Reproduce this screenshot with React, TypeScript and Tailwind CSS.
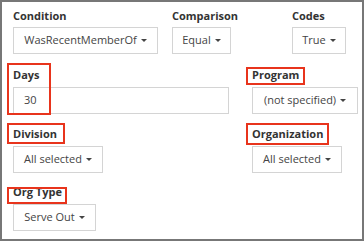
import React from "react";

const font = { fontFamily: '"Open Sans", "Noto Sans", sans-serif' };

function Caret() {
  return (
    <svg width="6" height="3" viewBox="0 0 6 3" className="ml-[4px] shrink-0">
      <path d="M0 0 L6 0 L3 3 Z" fill="#444" />
    </svg>
  );
}

function Select({ text, w }: { text: string; w: string }) {
  return (
    <div
      className={`${w} h-[27px] border border-[#d4d4d4] bg-white flex items-center justify-center text-[11px] text-[#444]`}
    >
      <span>{text}</span>
      <Caret />
    </div>
  );
}

function Label({ text, mb }: { text: string; mb: string }) {
  return <div className={`text-[11px] leading-[15px] font-bold text-[#333] ${mb}`}>{text}</div>;
}

function RedBox({ c }: { c: string }) {
  return <div className={`absolute border-2 border-[#e8341c] ${c}`} />;
}

export default function App() {
  return (
    <div className="relative w-[364px] h-[241px] bg-white border-2 border-[#777] pl-[11px] pt-[6px] flex flex-col" style={font}>
      <div className="flex">
        <div className="w-[159px]">
          <Label text="Condition" mb="mb-[4px]" />
          <Select text="WasRecentMemberOf" w="w-[145px]" />
        </div>
        <div className="w-[120px]">
          <Label text="Comparison" mb="mb-[4px]" />
          <Select text="Equal" w="w-[59px]" />
        </div>
        <div>
          <Label text="Codes" mb="mb-[4px]" />
          <Select text="True" w="w-[54px]" />
        </div>
      </div>
      <div className="flex mt-[13px]">
        <div className="w-[239px]">
          <Label text="Days" mb="mb-[5px]" />
          <div className="w-[216px] h-[27px] border border-[#d4d4d4] flex items-center pl-[10px] text-[11px] text-[#444]">30</div>
        </div>
        <div>
          <Label text="Program" mb="mb-[5px]" />
          <Select text="(not specified)" w="w-[106px]" />
        </div>
      </div>
      <div className="flex mt-[12px]">
        <div className="w-[239px]">
          <Label text="Division" mb="mb-[5px]" />
          <Select text="All selected" w="w-[90px]" />
        </div>
        <div>
          <Label text="Organization" mb="mb-[5px]" />
          <Select text="All selected" w="w-[90px]" />
        </div>
      </div>
      <div className="flex mt-[11px]">
        <div className="w-[239px]">
          <Label text="Org Type" mb="mb-[5px]" />
          <Select text="Serve Out" w="w-[83px]" />
        </div>
      </div>
      <RedBox c="left-[5px] top-[61px] w-[44px] h-[52px]" />
      <RedBox c="left-[244px] top-[65px] w-[59px] h-[18px]" />
      <RedBox c="left-[5px] top-[121px] w-[58px] h-[21px]" />
      <RedBox c="left-[244px] top-[121px] w-[83px] h-[22px]" />
      <RedBox c="left-[5px] top-[185px] w-[60px] h-[17px]" />
    </div>
  );
}
